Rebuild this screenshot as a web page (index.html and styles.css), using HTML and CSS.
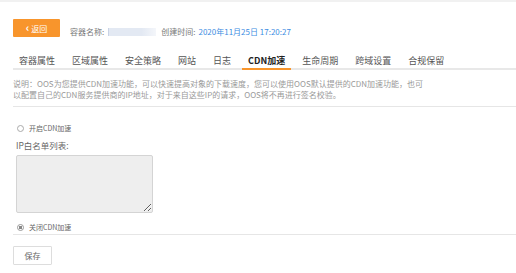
FILE: index.html
```html
<!DOCTYPE html>
<html lang="zh-CN">
<head>
  <meta charset="UTF-8" />
  <title>CDN加速</title>
  <link rel="stylesheet" href="styles.css">
</head>
<body>
  <div class="page">
    <div class="header">
      <button class="btn-back"><span class="chev">&lsaquo;</span>返回</button>
      <div class="info">
        <span class="info-label">容器名称:</span>
        <span class="info-name"></span>
        <span class="info-label">创建时间:</span>
        <span class="info-date">2020年11月25日 17:20:27</span>
      </div>
    </div>

    <ul class="tabs">
      <li class="tab">容器属性</li>
      <li class="tab">区域属性</li>
      <li class="tab">安全策略</li>
      <li class="tab">网站</li>
      <li class="tab">日志</li>
      <li class="tab active">CDN加速</li>
      <li class="tab">生命周期</li>
      <li class="tab">跨域设置</li>
      <li class="tab">合规保留</li>
    </ul>

    <p class="desc">说明：OOS为您提供CDN加速功能，可以快速提高对象的下载速度，您可以使用OOS默认提供的CDN加速功能，也可<br>以配置自己的CDN服务提供商的IP地址，对于来自这些IP的请求，OOS将不再进行签名校验。</p>

    <div class="form">
      <label class="radio-row">
        <input type="radio" name="cdn" class="radio">
        <span>开启CDN加速</span>
      </label>
      <div class="field-label">IP白名单列表:</div>
      <textarea class="ip-list" disabled></textarea>
      <label class="radio-row radio-last">
        <input type="radio" name="cdn" class="radio" checked>
        <span>关闭CDN加速</span>
      </label>
    </div>

    <button class="btn-save">保存</button>
  </div>
</body>
</html>
```

FILE: styles.css
```css
:root {
  --orange: #f8952c;
  --blue:   #3d8de2;
  --text:   #555;
  --muted:  #999;
  --line:   #e6e6e6;
}

* { box-sizing: border-box; margin: 0; padding: 0; }

body {
  background: #fff;
  font-family: "Noto Sans CJK SC", "Noto Sans", sans-serif;
  color: var(--text);
  border-top: 2px solid #f1f1f1;
}

.page {
  padding-left: 13px;
}

/* header: back button + container info */
.header {
  display: flex;
  align-items: flex-end;
  margin-top: 17px;
  height: 18px;
}
.btn-back {
  width: 47px;
  height: 18px;
  border: none;
  border-radius: 1px;
  background: var(--orange);
  color: #fff;
  font-family: inherit;
  font-size: 8px;
  display: flex;
  align-items: center;
  justify-content: center;
  gap: 2px;
  cursor: pointer;
}
.chev { font-size: 11px; line-height: 1; margin-top: -2px; font-weight: bold; }

.info {
  display: flex;
  align-items: center;
  margin-left: 10px;
  margin-bottom: -1px;
  font-size: 8px;
  line-height: 12px;
}
.info-label { color: #777; }
.info-name {
  width: 48px;
  height: 8px;
  margin: 0 5px 0 4px;
  background: linear-gradient(90deg, #c9d3e6 0 1px, #e3e9f3 1px 70%, #f4f6fa);
}
.info-date { color: var(--blue); margin-left: 3px; }

/* tabs */
.tabs {
  list-style: none;
  display: flex;
  gap: 5px;
  margin-top: 17px;
  border-bottom: 2px solid #e8e8e8;
}
.tab {
  padding: 0 6px;
  font-size: 9px;
  line-height: 14px;
  color: #555;
  border-bottom: 2px solid transparent;
  margin-bottom: -2px;
}
.tab.active {
  color: #222;
  font-weight: bold;
  border-bottom-color: var(--orange);
}

/* description */
.desc {
  padding: 8px 0 6px;
  font-size: 8px;
  line-height: 11px;
  color: var(--muted);
  border-bottom: 1px solid var(--line);
  white-space: nowrap;
}

/* form */
.form {
  padding-bottom: 2px;
  border-bottom: 1px solid var(--line);
}
.radio-row {
  display: flex;
  align-items: center;
  gap: 5px;
  margin-top: 16px;
  padding-left: 4px;
  height: 10px;
  font-size: 7px;
  color: #666;
}
.radio-last { margin-top: 9px; }
.radio {
  appearance: none;
  width: 7px;
  height: 7px;
  border: 1px solid #aaa;
  border-radius: 50%;
  background: #fff;
}
.radio:checked {
  background: radial-gradient(circle, #888 0 1.6px, #fff 2px);
  border-color: #999;
}

.field-label {
  margin-top: 6px;
  padding-left: 3px;
  font-size: 8.5px;
  line-height: 12px;
  color: #666;
}
.ip-list {
  display: block;
  width: 137px;
  height: 58px;
  margin: 4px 0 0 3px;
  background: #eee;
  border: 1px solid #d4d4d4;
  border-radius: 2px;
}

.btn-save {
  display: block;
  width: 39px;
  height: 19px;
  margin-top: 11px;
  background: #fff;
  border: 1px solid #ddd;
  border-radius: 1px;
  font-family: inherit;
  font-size: 8px;
  color: #666;
  cursor: pointer;
}
```
